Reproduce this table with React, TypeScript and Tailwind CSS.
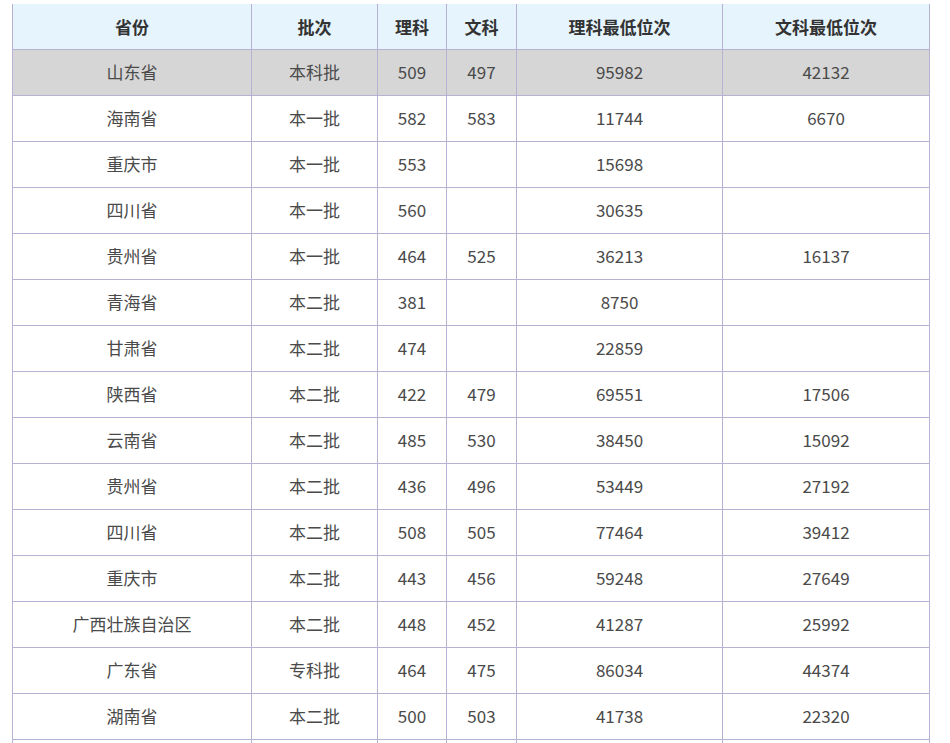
import React from "react";

const rows: [string, string, string, string, string, string][] = [
  ["山东省", "本科批", "509", "497", "95982", "42132"],
  ["海南省", "本一批", "582", "583", "11744", "6670"],
  ["重庆市", "本一批", "553", "", "15698", ""],
  ["四川省", "本一批", "560", "", "30635", ""],
  ["贵州省", "本一批", "464", "525", "36213", "16137"],
  ["青海省", "本二批", "381", "", "8750", ""],
  ["甘肃省", "本二批", "474", "", "22859", ""],
  ["陕西省", "本二批", "422", "479", "69551", "17506"],
  ["云南省", "本二批", "485", "530", "38450", "15092"],
  ["贵州省", "本二批", "436", "496", "53449", "27192"],
  ["四川省", "本二批", "508", "505", "77464", "39412"],
  ["重庆市", "本二批", "443", "456", "59248", "27649"],
  ["广西壮族自治区", "本二批", "448", "452", "41287", "25992"],
  ["广东省", "专科批", "464", "475", "86034", "44374"],
  ["湖南省", "本二批", "500", "503", "41738", "22320"],
  // next row only shows its top border in the shot
  ["", "", "", "", "", ""],
];

const headers = ["省份", "批次", "理科", "文科", "理科最低位次", "文科最低位次"];
const widths = ["w-[239px]", "w-[126px]", "w-[69px]", "w-[70px]", "w-[206px]", "w-[207px]"];

export default function App() {
  return (
    <div
      className="h-[743px] overflow-hidden bg-white pt-[4px] pl-[12px]"
      style={{ fontFamily: '"Noto Sans CJK SC", "Noto Sans", sans-serif' }}
    >
      <table className="w-[918px] table-fixed border-collapse text-[17px]">
        <thead>
          <tr className="bg-[#e6f4fd]">
            {headers.map((h, i) => (
              <th
                key={i}
                className={`${widths[i]} h-[45px] border-x border-b border-[#b7b1d3] border-t-0 text-center font-bold text-[#333]`}
              >
                {h}
              </th>
            ))}
          </tr>
        </thead>
        <tbody>
          {rows.map((r, ri) => (
            <tr key={ri} className={ri === 0 ? "bg-[#d6d6d6]" : "bg-white"}>
              {r.map((c, ci) => (
                <td
                  key={ci}
                  className="h-[46px] border border-[#b7b1d3] text-center text-[#4a4a4a]"
                >
                  {c}
                </td>
              ))}
            </tr>
          ))}
        </tbody>
      </table>
    </div>
  );
}
